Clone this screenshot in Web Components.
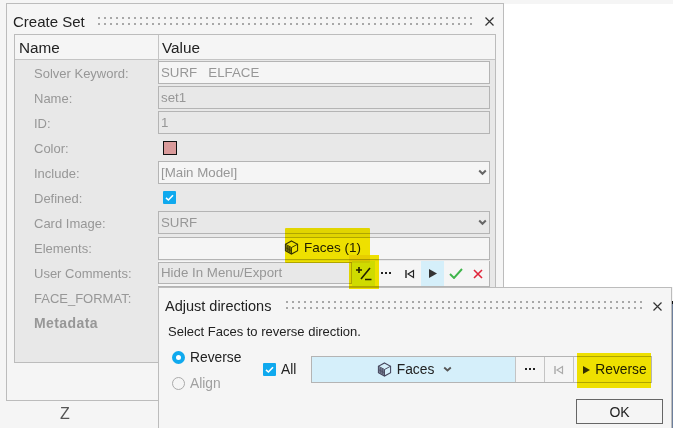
<!DOCTYPE html>
<html><head><meta charset="utf-8">
<style>
html,body{margin:0;padding:0;height:100%;overflow:hidden}
body{width:673px;height:428px;background:#f5f5f5;font:13px "Liberation Sans",Arial,sans-serif;color:#222}
</style></head>
<body>
<x-desktop>
  <x-window slot="w" title="Create Set" style="left:6px;top:3px;width:498px;height:398px">
    <x-table>
      <x-field label="Solver Keyword:"><x-input light>SURF&nbsp;&nbsp;&nbsp;ELFACE</x-input></x-field>
      <x-field label="Name:"><x-input>set1</x-input></x-field>
      <x-field label="ID:"><x-input>1</x-input></x-field>
      <x-field label="Color:"><x-swatch></x-swatch></x-field>
      <x-field label="Include:"><x-input light arrow>[Main Model]</x-input></x-field>
      <x-field label="Defined:"><x-check style="margin-left:5px"></x-check></x-field>
      <x-field label="Card Image:"><x-input arrow>SURF</x-input></x-field>
      <x-field label="Elements:"><x-facebtn>Faces (1)</x-facebtn></x-field>
      <x-field label="User Comments:"><x-commentbar></x-commentbar></x-field>
      <x-field label="FACE_FORMAT:"></x-field>
      <x-field label="Metadata" bold></x-field>
    </x-table>
  </x-window>
  <x-window slot="w" title="Adjust directions" small style="left:158px;top:287px;width:514px;height:150px">
    <x-adjust></x-adjust>
  </x-window>
</x-desktop>

<script>
const CUBE=(c1,c2,s)=>`<svg width="${s}" height="${s}" viewBox="0 0 16 16" style="display:block;flex:none">
<path d="M2 5.200 8 8.400V14.500L2 11.200Z" fill="${c2}" opacity=".75"/>
<path d="M8 1 14.500 4.500V11.500L8 15 1.500 11.500V4.500Z" fill="none" stroke="${c1}" stroke-width="1.100"/>
<path d="M1.500 4.500 8 8 14.500 4.500M8 8V15" fill="none" stroke="${c1}" stroke-width="1"/>
<path d="M4 6.300V12.300M6 7.400V13.400M2 8.300 8 11.500" stroke="${c1}" stroke-width=".7"/>
</svg>`;
const mk=(name,css,html)=>{
  customElements.define(name,class extends HTMLElement{
    constructor(){super();const r=this.attachShadow({mode:'open'});
      r.innerHTML=`<style>${css}</style>`+(typeof html==='function'?html(this):html);}
  });
};
mk('x-desktop',`
:host{display:block;position:relative;width:673px;height:428px;overflow:hidden}
.canvas{position:absolute;left:504px;top:4px;width:169px;height:283px;background:#fff}
.z{position:absolute;left:60px;top:405px;font-size:16px;color:#555}
.edge{position:absolute;left:672px;top:301px;width:1px;height:127px;background:#6d7f9c}
.edge:before{content:"";display:block;height:3px;background:#111}
.hl{position:absolute;background:#f8ea00;mix-blend-mode:multiply;pointer-events:none}
`,`<div class="canvas"></div><div class="edge"></div><span class="z">Z</span><slot name="w"></slot>
<div class="hl" style="left:285px;top:228px;width:85px;height:35px;border-radius:1px"></div>
<div class="hl" style="left:349px;top:255px;width:30px;height:34px"></div>
<div class="hl" style="left:577px;top:353px;width:74px;height:35px"></div>`);

mk('x-window',`
:host{display:block;position:absolute;box-sizing:border-box;background:#f5f5f5;border:1px solid #bcbcbc}
.head{display:flex;align-items:center;height:30px;padding:5px 8px 0 6px;box-sizing:border-box;font-size:15px;color:#222}
:host([small]) .head{height:36px;padding:0 8px 0 6px;font-size:14.500px}
.t{flex:none}
.d{flex:1;height:8px;margin:-1px 12px 0 13px;background-image:linear-gradient(90deg,#a8a8a8 2px,transparent 2px),linear-gradient(90deg,#a8a8a8 2px,transparent 2px);background-size:6px 2px,6px 2px;background-repeat:repeat-x;background-position:0 0,0 6px}
:host([small]) .d{margin:-3px 8px 0 15px}
svg{display:block;flex:none}
`,el=>`<div class="head"><span class="t">${el.getAttribute('title')}</span><span class="d"></span>
<svg width="11" height="11" viewBox="0 0 11 11"><path d="M1.500 1.500 9.500 9.500M9.500 1.500 1.500 9.500" stroke="#333" stroke-width="1.200"/></svg></div><slot></slot>`);

mk('x-table',`
:host{display:block;margin:0 7px;box-sizing:border-box;height:329px;border:1px solid #bcbcbc;background:#e8e8e8}
.h{display:grid;grid-template-columns:143px 1fr;height:24px;background:#f5f5f5;border-bottom:1px solid #c4c4c4;font-size:15.300px;color:#222;line-height:26px}
.h span{padding-left:4px}
.h span+span{border-left:1px solid #c4c4c4;padding-left:3px}
.b{padding:1px 5px 0 0;display:grid;grid-auto-rows:25px}
`,`<div class="h"><span>Name</span><span>Value</span></div><div class="b"><slot></slot></div>`);

mk('x-field',`
:host{display:grid;grid-template-columns:143px 1fr;height:25px;align-items:start}
.l{padding-left:19px;line-height:25px;color:#979797;font-size:13px;white-space:nowrap}
:host([bold]) .l{font-weight:700;font-size:14px;letter-spacing:.4px}
.v{min-width:0;height:23px;display:flex;align-items:center}
::slotted(*){flex:1}
`,el=>`<span class="l">${el.getAttribute('label')}</span><div class="v"><slot></slot></div>`);

mk('x-input',`
:host{display:flex;align-items:center;justify-content:space-between;box-sizing:border-box;height:23px;border:1px solid #b4b4b4;background:#e8e8e8;color:#979797;padding:0 2px;font-size:13.300px}
:host([light]){background:#f5f5f5}
svg{display:none}
:host([arrow]) svg{display:block}
`,`<span><slot></slot></span><svg width="9" height="7" viewBox="0 0 9 7"><path d="M1.200 1.500 4.500 4.800 7.800 1.500" fill="none" stroke="#666" stroke-width="2"/></svg>`);

mk('x-swatch',`:host{flex:none!important;display:block;box-sizing:border-box;width:14px;height:14px;margin-left:5px;border:1px solid #111;background:#d99a9a}`,``);
mk('x-check',`:host{flex:none!important;display:block;width:13px;height:13px;background:#0fa9ee;border-radius:1px}svg{display:block}`,
`<svg width="13" height="13" viewBox="0 0 13 13"><path d="M3 6.800 5.400 9 10 4.200" fill="none" stroke="#fff" stroke-width="1.600"/></svg>`);

mk('x-facebtn',`
:host{display:flex;align-items:center;justify-content:center;gap:5px;box-sizing:border-box;height:23px;border:1px solid #b4b4b4;background:#f5f5f5;color:#222;font-size:13.500px;margin-top:1px;padding:0 3px 2px 0}
`,`${CUBE('#333','#555',15)}<span><slot></slot></span>`);

mk('x-commentbar',`
:host{display:flex;box-sizing:border-box;height:26px;border:1px solid #b4b4b4;border-width:0 1px 1px 0;margin-top:3px;background:#f5f5f5}
.i{flex:1;min-width:0;box-sizing:border-box;height:22px;margin-top:1px;border:1px solid #b4b4b4;background:#e8e8e8;color:#979797;padding-left:2px;line-height:20px;font-size:13.300px}
.btns{display:flex;flex:none}
.b{width:23px;height:25px;display:flex;align-items:center;justify-content:center}
.b:last-child{width:22px}
.on{background:#d5effa}
svg{display:block}
`,`<div class="i">Hide In Menu/Export</div><div class="btns">
<div class="b on"><svg width="18" height="18" viewBox="0 0 18 18"><path d="M1 5H7M4 2V8M15 3 6 14M10 14.500H16.500" fill="none" stroke="#222" stroke-width="1.600"/></svg></div>
<div class="b"><svg width="11" height="3"><path d="M0 0h2v2H0zM4 0h2v2H4zM8 0h2v2H8z" fill="#222"/></svg></div>
<div class="b"><svg width="10" height="10" viewBox="0 0 10 10"><path d="M1 1V9" stroke="#222" stroke-width="1.400"/><path d="M8.500 1.500V8.500L3 5Z" fill="none" stroke="#222" stroke-width="1.200"/></svg></div>
<div class="b on"><svg width="8" height="9" viewBox="0 0 8 9"><path d="M0 0 8 4.500 0 9Z" fill="#333"/></svg></div>
<div class="b"><svg width="14" height="11" viewBox="0 0 14 11"><path d="M1 6 5 10 13 1" fill="none" stroke="#3fb54b" stroke-width="1.900"/></svg></div>
<div class="b"><svg width="10" height="10" viewBox="0 0 10 10"><path d="M1 1 9 9M9 1 1 9" stroke="#e0243a" stroke-width="1.600"/></svg></div>
</div>`);

mk('x-adjust',`
:host{display:block;padding:0 9px;color:#222;font-size:13px}
.msg{height:20px;line-height:16px}
.main{display:flex;height:53px}
.radios{width:95px;flex:none;padding-left:4px;display:grid;grid-auto-rows:26px;box-sizing:border-box}
.r{display:flex;align-items:center;gap:5px;font-size:13.800px}
.dis{color:#a0a0a0}
.rb{box-sizing:border-box;width:13px;height:13px;border-radius:50%;border:1px solid #aaa;background:#f5f5f5}
.rb.on{border:4px solid #0fa9ee;background:#fff}
.all{display:flex;align-items:center;gap:5px;width:48px;flex:none;font-size:13.800px;height:14px;margin-top:18px}
.bar{display:flex;height:27px;box-sizing:border-box;border:1px solid #b4b4b4;width:341px;flex:none;margin-top:12px}
.seg{display:flex;align-items:center;justify-content:center;border-left:1px solid #c4c4c4;width:28px;flex:none}
.f{flex:1;border-left:0;background:#d5effa;gap:5px;font-size:13.800px;padding-left:2px}
.rev{width:78px;gap:5px;font-size:13.800px;padding-left:5px;box-sizing:border-box}
.f svg.ch{margin-left:4px}
.foot{display:flex;justify-content:flex-end;margin:2px -1px 0 0}
.ok{box-sizing:border-box;width:87px;height:25px;border:1px solid #666;display:flex;align-items:center;justify-content:center;font-size:14px}
svg{display:block;flex:none}
`,`<div class="msg">Select Faces to reverse direction.</div>
<div class="main">
 <div class="radios"><div class="r"><span class="rb on"></span>Reverse</div><div class="r dis"><span class="rb"></span>Align</div></div>
 <div class="all"><x-check></x-check>All</div>
 <div class="bar">
  <div class="seg f">${CUBE('#44445a','#55556e',15)}<span>Faces</span><svg class="ch" width="9" height="7" viewBox="0 0 9 7"><path d="M1.200 1.500 4.500 4.500 7.800 1.500" fill="none" stroke="#555" stroke-width="1.800"/></svg></div>
  <div class="seg"><svg width="11" height="3"><path d="M0 0h2v2H0zM4 0h2v2H4zM8 0h2v2H8z" fill="#222"/></svg></div>
  <div class="seg"><svg width="10" height="10" viewBox="0 0 10 10"><path d="M1 1V9" stroke="#aaa" stroke-width="1.400"/><path d="M8.500 1.500V8.500L3 5Z" fill="none" stroke="#aaa" stroke-width="1.200"/></svg></div>
  <div class="seg rev"><svg width="7" height="8" viewBox="0 0 7 8"><path d="M0 0 7 4 0 8Z" fill="#333"/></svg><span>Reverse</span></div>
 </div>
</div>
<div class="foot"><div class="ok">OK</div></div>`);
</script>
</body></html>
